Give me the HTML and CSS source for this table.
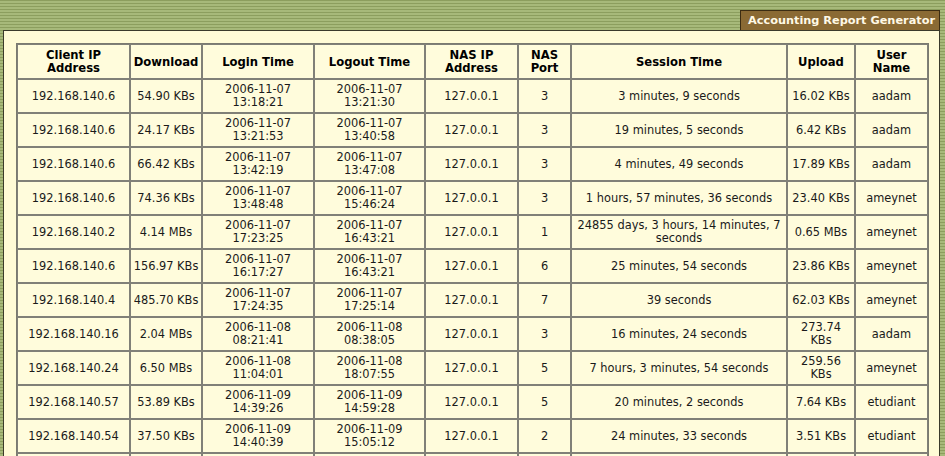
FILE: index.html
```html
<!DOCTYPE html>
<html>
<head>
<meta charset="utf-8">
<title>Accounting Report Generator</title>
<link rel="stylesheet" href="styles.css">
</head>
<body>
<div class="tabbar"><div class="tab">Accounting Report Generator</div></div>
<div class="panel">
<table class="report">
<colgroup>
<col class="c1"><col class="c2"><col class="c3"><col class="c4"><col class="c5"><col class="c6"><col class="c7"><col class="c8"><col class="c9">
</colgroup>
<thead>
<tr><th>Client IP<br>Address</th><th>Download</th><th>Login Time</th><th>Logout Time</th><th>NAS IP<br>Address</th><th>NAS<br>Port</th><th>Session Time</th><th>Upload</th><th>User<br>Name</th></tr>
</thead>
<tbody>
<tr><td>192.168.140.6</td><td>54.90 KBs</td><td>2006-11-07<br>13:18:21</td><td>2006-11-07<br>13:21:30</td><td>127.0.0.1</td><td>3</td><td>3 minutes, 9 seconds</td><td>16.02 KBs</td><td>aadam</td></tr>
<tr><td>192.168.140.6</td><td>24.17 KBs</td><td>2006-11-07<br>13:21:53</td><td>2006-11-07<br>13:40:58</td><td>127.0.0.1</td><td>3</td><td>19 minutes, 5 seconds</td><td>6.42 KBs</td><td>aadam</td></tr>
<tr><td>192.168.140.6</td><td>66.42 KBs</td><td>2006-11-07<br>13:42:19</td><td>2006-11-07<br>13:47:08</td><td>127.0.0.1</td><td>3</td><td>4 minutes, 49 seconds</td><td>17.89 KBs</td><td>aadam</td></tr>
<tr><td>192.168.140.6</td><td>74.36 KBs</td><td>2006-11-07<br>13:48:48</td><td>2006-11-07<br>15:46:24</td><td>127.0.0.1</td><td>3</td><td>1 hours, 57 minutes, 36 seconds</td><td>23.40 KBs</td><td>ameynet</td></tr>
<tr><td>192.168.140.2</td><td>4.14 MBs</td><td>2006-11-07<br>17:23:25</td><td>2006-11-07<br>16:43:21</td><td>127.0.0.1</td><td>1</td><td>24855 days, 3 hours, 14 minutes, 7 seconds</td><td>0.65 MBs</td><td>ameynet</td></tr>
<tr><td>192.168.140.6</td><td>156.97 KBs</td><td>2006-11-07<br>16:17:27</td><td>2006-11-07<br>16:43:21</td><td>127.0.0.1</td><td>6</td><td>25 minutes, 54 seconds</td><td>23.86 KBs</td><td>ameynet</td></tr>
<tr><td>192.168.140.4</td><td>485.70 KBs</td><td>2006-11-07<br>17:24:35</td><td>2006-11-07<br>17:25:14</td><td>127.0.0.1</td><td>7</td><td>39 seconds</td><td>62.03 KBs</td><td>ameynet</td></tr>
<tr><td>192.168.140.16</td><td>2.04 MBs</td><td>2006-11-08<br>08:21:41</td><td>2006-11-08<br>08:38:05</td><td>127.0.0.1</td><td>3</td><td>16 minutes, 24 seconds</td><td>273.74 KBs</td><td>aadam</td></tr>
<tr><td>192.168.140.24</td><td>6.50 MBs</td><td>2006-11-08<br>11:04:01</td><td>2006-11-08<br>18:07:55</td><td>127.0.0.1</td><td>5</td><td>7 hours, 3 minutes, 54 seconds</td><td>259.56 KBs</td><td>ameynet</td></tr>
<tr><td>192.168.140.57</td><td>53.89 KBs</td><td>2006-11-09<br>14:39:26</td><td>2006-11-09<br>14:59:28</td><td>127.0.0.1</td><td>5</td><td>20 minutes, 2 seconds</td><td>7.64 KBs</td><td>etudiant</td></tr>
<tr><td>192.168.140.54</td><td>37.50 KBs</td><td>2006-11-09<br>14:40:39</td><td>2006-11-09<br>15:05:12</td><td>127.0.0.1</td><td>2</td><td>24 minutes, 33 seconds</td><td>3.51 KBs</td><td>etudiant</td></tr>
<tr class="blank"><td></td><td></td><td></td><td></td><td></td><td></td><td></td><td></td><td></td></tr>
</tbody>
</table>
</div>
</body>
</html>
```

FILE: styles.css
```css
html, body {
  margin: 0;
  padding: 0;
}
body {
  background: repeating-linear-gradient(to bottom, #8c9e5e 0px, #8c9e5e 1px, #a7b97a 1px, #a7b97a 3px);
  font-family: "DejaVu Sans", Verdana, sans-serif;
  font-size: 11.4px;
  color: #1a1a1a;
  min-height: 456px;
}
.tabbar {
  display: flex;
  justify-content: flex-end;
  padding: 10px 5px 0 0;
}
.tab {
  background: #8a6a34;
  border: 1px solid #3b2c12;
  border-bottom: none;
  color: #fff9e6;
  font-weight: bold;
  font-size: 11.3px;
  line-height: 19px;
  padding: 0 4px 0 7px;
  width: 187px;
  text-align: left;
  white-space: nowrap;
}
.panel {
  margin: 0 5px 0 3px;
  background: #fffbd6;
  border: 1px solid #3a3a2a;
  padding: 12px 12px 0 12px;
}
.report {
  width: 100%;
  table-layout: fixed;
  border-collapse: separate;
  border-spacing: 0;
  border: 1px solid #7a7a70;
  background: #fffcdc;
}
.c1 { width: 113px; }
.c2 { width: 72px; }
.c3 { width: 112px; }
.c4 { width: 111px; }
.c5 { width: 93px; }
.c6 { width: 53px; }
.c7 { width: 216px; }
.c8 { width: 68px; }
.c9 { width: 73px; }
.report th, .report td {
  border: 1px solid #808078;
  text-align: center;
  vertical-align: middle;
  padding: 3px 2px;
  line-height: 13px;
  height: 26px;
}
.report th {
  font-weight: bold;
  font-size: 11.6px;
  color: #000;
  padding: 4px 2px 3px;
}
```
